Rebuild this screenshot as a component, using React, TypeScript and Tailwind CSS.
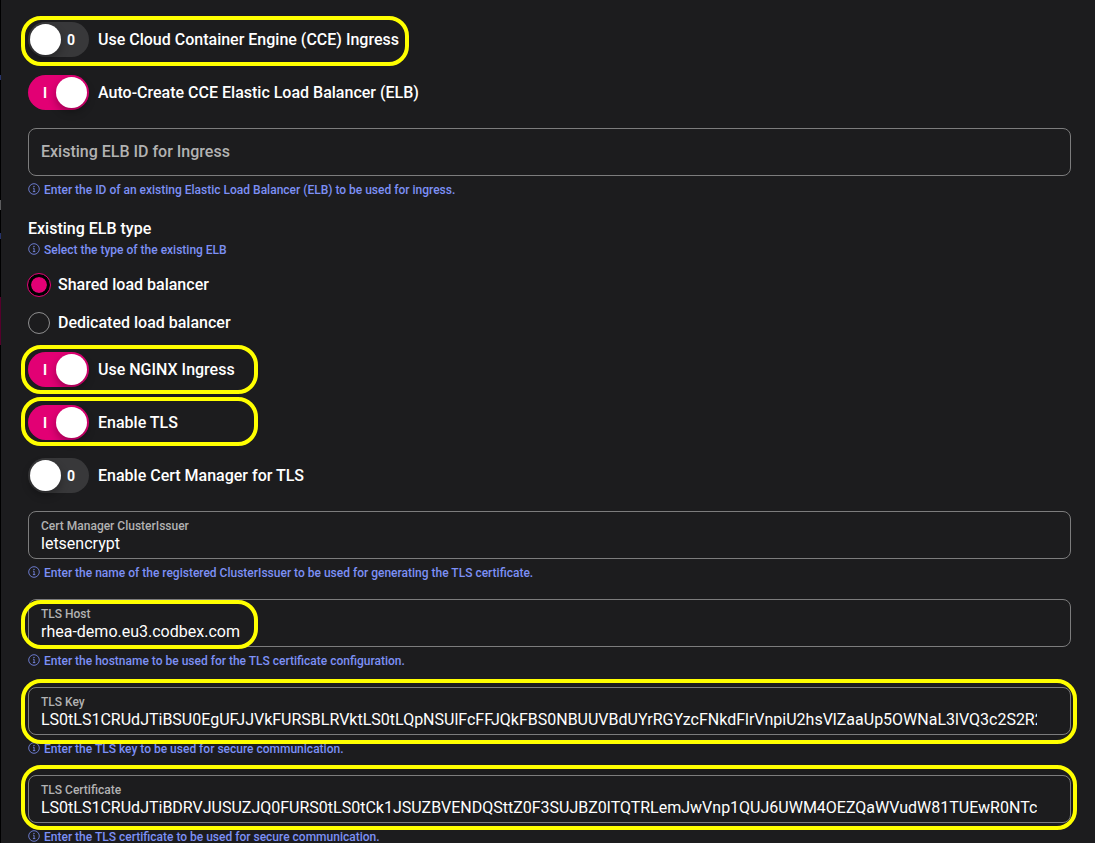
import { useId, useState } from "react";
import type { ReactNode } from "react";

const TLS_KEY =
  "LS0tLS1CRUdJTiBSU0EgUFJJVkFURSBLRVktLS0tLQpNSUlFcFFJQkFBS0NBUUVBdUYrRGYzcFNkdFlrVnpiU2hsVlZaaUp5OWNaL3lVQ3c2S2R2d1";
const TLS_CERT =
  "LS0tLS1CRUdJTiBDRVJUSUZJQ0FURS0tLS0tCk1JSUZBVENDQSttZ0F3SUJBZ0lTQTRLemJwVnp1QUJ6UWM4OEZQaWVudW81TUEwR0NTcUd";

function Marker({ className }: { className: string }) {
  return (
    <span
      aria-hidden="true"
      className={`pointer-events-none absolute border-4 border-[#ffff00] ${className}`}
    />
  );
}

function Hint({ id, children }: { id?: string; children: ReactNode }) {
  return (
    <p id={id} className="flex items-start gap-1 text-xs leading-4 font-medium text-[#7d90f5]">
      <svg viewBox="0 0 12 12" className="mt-px size-3 shrink-0" fill="none" stroke="currentColor" aria-hidden="true">
        <circle cx="6" cy="6" r="5.3" strokeWidth="0.8" />
        <path d="M5 5.2H6.1V8.6M4.9 8.6H7.3" strokeWidth="0.8" />
        <circle cx="6" cy="3.4" r="0.6" fill="currentColor" stroke="none" />
      </svg>
      {children}
    </p>
  );
}

function Toggle({ label, initial, marker }: { label: string; initial: boolean; marker?: ReactNode }) {
  const [on, setOn] = useState(initial);
  return (
    <label className="relative flex w-fit cursor-pointer items-center gap-[9px] text-base leading-6 font-medium">
      <input
        type="checkbox"
        role="switch"
        checked={on}
        onChange={(e) => setOn(e.target.checked)}
        className="peer sr-only"
      />
      <span
        aria-hidden="true"
        className={`flex h-[35px] w-[61px] items-center rounded-full text-sm font-bold peer-focus-visible:ring-2 ${
          on ? "flex-row-reverse bg-[#e20074] pr-0.5 pl-1.5" : "bg-[#38383a] pr-2 pl-0.5"
        }`}
      >
        <span className="size-[31px] shrink-0 rounded-full bg-white shadow-[0_4px_8px_rgba(0,0,0,0.3)]" />
        <span className="flex-1 text-center">{on ? "I" : "0"}</span>
      </span>
      {label}
      {marker}
    </label>
  );
}

function Radio({ label, defaultChecked }: { label: string; defaultChecked?: boolean }) {
  return (
    <label className="flex w-fit cursor-pointer items-center gap-2 text-base leading-6 font-medium">
      <input
        type="radio"
        name="elb-type"
        defaultChecked={defaultChecked}
        className="size-[22px] appearance-none rounded-full border border-[#8e8e8f] checked:border-[3px] checked:border-black checked:bg-[#e20074] checked:bg-clip-padding checked:outline checked:outline-[#e20074]"
      />
      {label}
    </label>
  );
}

function Field({
  label,
  value,
  hint,
  marker,
}: {
  label: string;
  value?: string;
  hint: string;
  marker?: ReactNode;
}) {
  const id = useId();
  return (
    <div>
      <div
        className={`relative flex h-12 flex-col justify-center rounded-lg border border-[#7c7c7d] pr-[33px] pl-3 ${
          value ? "pt-0.5" : ""
        }`}
      >
        {value ? (
          <label htmlFor={id} className="text-xs leading-4 font-medium text-[#b2b2b2]">
            {label}
          </label>
        ) : null}
        <input
          id={id}
          type="text"
          aria-label={value ? undefined : label}
          aria-describedby={id + "-hint"}
          placeholder={value ? undefined : label}
          defaultValue={value}
          className={`h-5 w-full bg-transparent text-base outline-none placeholder:text-[#b2b2b2] ${
            value ? "" : "font-medium"
          }`}
        />
        {marker}
      </div>
      <div className="pt-1.5">
        <Hint id={id + "-hint"}>{hint}</Hint>
      </div>
    </div>
  );
}

export default function App() {
  return (
    <div className="flex min-h-screen bg-[#1c1c1e] font-[Roboto,sans-serif] text-white">
      <div className="w-px shrink-0 bg-[linear-gradient(#000_75px,#26336b_75px_80px,#000_80px_200px,#5c5c5e_200px_210px,#000_210px_233px,#26336b_233px_239px,#000_239px_297px,#56002c_297px_345px,#000_345px)]" />
      <form className="flex min-w-0 flex-1 flex-col pt-[22px] pr-6 pl-[27px]" onSubmit={(e) => e.preventDefault()}>
        <div className="flex flex-col gap-[18px]">
          <Toggle
            label="Use Cloud Container Engine (CCE) Ingress"
            initial={false}
            marker={<Marker className="-top-1.5 -bottom-[9px] -left-[7px] w-[388px] rounded-[20px]" />}
          />
          <Toggle label="Auto-Create CCE Elastic Load Balancer (ELB)" initial />
          <Field
            label="Existing ELB ID for Ingress"
            hint="Enter the ID of an existing Elastic Load Balancer (ELB) to be used for ingress."
          />
        </div>
        <fieldset className="pt-[19px]">
          <legend className="float-left w-full text-base leading-6 font-medium">Existing ELB type</legend>
          <div className="clear-both pt-px">
            <Hint>Select the type of the existing ELB</Hint>
          </div>
          <div className="flex flex-col gap-3.5 pt-[15px]">
            <Radio label="Shared load balancer" defaultChecked />
            <Radio label="Dedicated load balancer" />
          </div>
        </fieldset>
        <div className="flex flex-col gap-[18px] pt-[17px]">
          <Toggle
            label="Use NGINX Ingress"
            initial
            marker={<Marker className="-inset-y-[7px] -left-[7px] w-[237px] rounded-[20px]" />}
          />
          <Toggle
            label="Enable TLS"
            initial
            marker={<Marker className="-top-2 -bottom-1.5 -left-[7px] w-[237px] rounded-[20px]" />}
          />
          <Toggle label="Enable Cert Manager for TLS" initial={false} />
          <Field
            label="Cert Manager ClusterIssuer"
            value="letsencrypt"
            hint="Enter the name of the registered ClusterIssuer to be used for generating the TLS certificate."
          />
          <Field
            label="TLS Host"
            value="rhea-demo.eu3.codbex.com"
            hint="Enter the hostname to be used for the TLS certificate configuration."
            marker={<Marker className="top-0 -bottom-[3px] -left-2 w-[237px] rounded-[20px]" />}
          />
          <Field
            label="TLS Key"
            value={TLS_KEY}
            hint="Enter the TLS key to be used for secure communication."
            marker={<Marker className="-top-[9px] -right-[7px] -bottom-[10px] -left-2 rounded-[20px]" />}
          />
          <Field
            label="TLS Certificate"
            value={TLS_CERT}
            hint="Enter the TLS certificate to be used for secure communication."
            marker={<Marker className="-top-[11px] -right-[7px] -bottom-2 -left-2 rounded-[20px]" />}
          />
        </div>
      </form>
    </div>
  );
}
